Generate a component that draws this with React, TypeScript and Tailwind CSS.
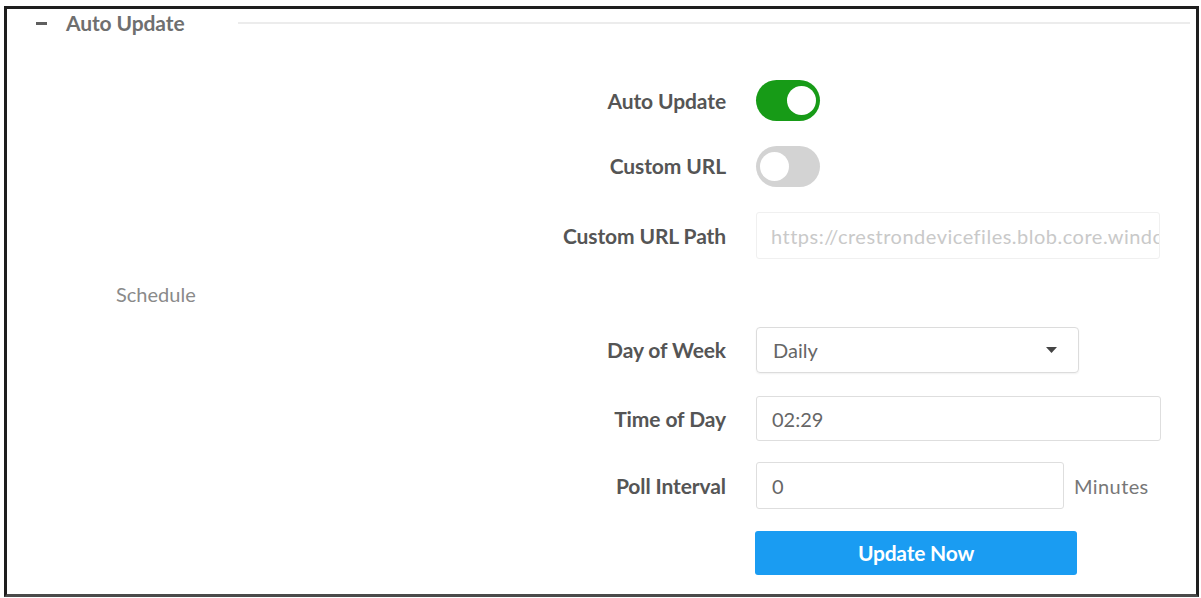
import React from 'react';

const font = { fontFamily: 'Lato, "Open Sans", sans-serif' };

interface ToggleProps {
  on: boolean;
}

function Toggle({ on }: ToggleProps) {
  return (
    <div
      className={`w-[64px] h-[41px] rounded-full flex items-center px-[4px] ${
        on ? 'bg-[#179b17] justify-end' : 'bg-[#d3d3d3] justify-start'
      }`}
    >
      <div className="w-[29px] h-[29px] rounded-full bg-white" />
    </div>
  );
}

interface RowProps {
  label: string;
  className?: string;
  children: React.ReactNode;
}

function Row({ label, className = '', children }: RowProps) {
  return (
    <div className={`flex items-center ${className}`}>
      <div className="w-[719px] text-right text-[21px] font-bold text-[#555] tracking-[-0.1px]">
        {label}
      </div>
      <div className="ml-[30px] flex items-center">{children}</div>
    </div>
  );
}

export default function App() {
  return (
    <div className="w-[1201px] h-[598px] bg-white pt-[6px] pl-[4px]" style={font}>
      <div className="w-[1195px] h-[591px] border-[3px] border-[#1e1e1e] border-b-[#4a4a4a] flex flex-col">
        {/* section header */}
        <div className="flex items-center h-[28px]">
          <div className="ml-[29px] w-[11px] h-[3px] bg-[#5f5f5f]" />
          <span className="ml-[19px] text-[21px] font-bold text-[#6f6f6f] tracking-[-0.1px]">
            Auto Update
          </span>
          <div className="ml-[53px] flex-1 mr-[6px] h-[2px] bg-[#ececec]" />
        </div>

        <Row label="Auto Update" className="mt-[43px] h-[41px]">
          <Toggle on />
        </Row>

        <Row label="Custom URL" className="mt-[25px] h-[40px]">
          <Toggle on={false} />
        </Row>

        <Row label="Custom URL Path" className="mt-[26px] h-[47px]">
          <div className="w-[404px] h-[47px] border border-[#f0f0f0] rounded-[3px] flex items-center pl-[14px] overflow-hidden">
            <span className="text-[20px] text-[#c9c9c9] whitespace-nowrap tracking-[0.5px]">
              https://crestrondevicefiles.blob.core.windows.net
            </span>
          </div>
        </Row>

        <div className="mt-[17px] h-[36px] flex items-center pl-[109px] text-[20px] text-[#8a8a8a]">
          Schedule
        </div>

        <Row label="Day of Week" className="mt-[15px] h-[46px]">
          <div className="w-[323px] h-[46px] border border-[#dcdcdc] rounded-[4px] shadow-[0_1px_2px_rgba(0,0,0,0.06)] flex items-center justify-between pl-[16px] pr-[21px]">
            <span className="text-[20px] text-[#666]">Daily</span>
            <svg width="11" height="6" viewBox="0 0 11 6">
              <path d="M0 0 L11 0 L5.5 6 Z" fill="#444" />
            </svg>
          </div>
        </Row>

        <Row label="Time of Day" className="mt-[23px] h-[45px]">
          <div className="w-[405px] h-[45px] border border-[#dedede] rounded-[3px] flex items-center pl-[15px]">
            <span className="text-[20px] text-[#666]">02:29</span>
          </div>
        </Row>

        <Row label="Poll Interval" className="mt-[21px] h-[47px]">
          <div className="w-[308px] h-[47px] border border-[#dedede] rounded-[3px] flex items-center pl-[15px]">
            <span className="text-[20px] text-[#666]">0</span>
          </div>
          <span className="ml-[10px] text-[20px] text-[#777] tracking-[0.4px]">Minutes</span>
        </Row>

        <div className="mt-[22px] flex">
          <button className="ml-[748px] w-[322px] h-[44px] rounded-[3px] bg-[#1a9cf2] text-white text-[21px] font-bold tracking-[-0.2px]">
            Update Now
          </button>
        </div>
      </div>
    </div>
  );
}
